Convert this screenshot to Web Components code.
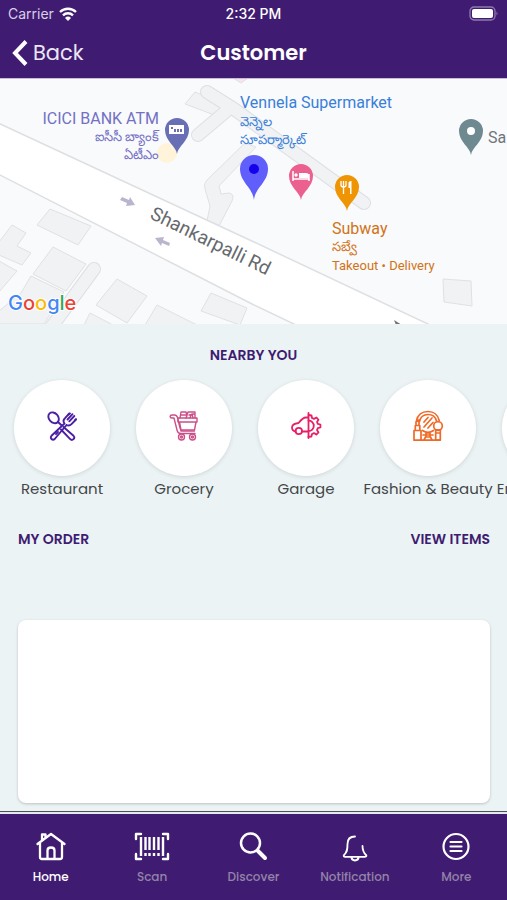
<!DOCTYPE html>
<html lang="en">
<head>
<meta charset="utf-8">
<meta name="viewport" content="width=device-width, initial-scale=1">
<title>Customer</title>
<style>
  body {
    margin: 0;
    min-height: 100vh;
    display: flex;
    flex-direction: column;
    background: #ebf3f5;
    font-family: Poppins, Inter, sans-serif;
    --purple: #3f1c71;
    --ink: #444749;
  }
  main {
    flex: 1;
    display: flex;
    flex-direction: column;
    overflow: hidden;
  }
</style>
</head>
<body>
  <app-header heading="Customer" time="2:32 PM"></app-header>
  <main>
    <map-view></map-view>
    <category-list heading="NEARBY YOU">
      <category-item icon="restaurant">Restaurant</category-item>
      <category-item icon="grocery">Grocery</category-item>
      <category-item icon="garage">Garage</category-item>
      <category-item icon="beauty">Fashion &amp; Beauty</category-item>
      <category-item>Entertainment</category-item>
    </category-list>
    <order-panel heading="MY ORDER" action="VIEW ITEMS"></order-panel>
  </main>
  <tab-bar>
    <tab-item icon="home" active>Home</tab-item>
    <tab-item icon="scan">Scan</tab-item>
    <tab-item icon="discover">Discover</tab-item>
    <tab-item icon="notification">Notification</tab-item>
    <tab-item icon="more">More</tab-item>
  </tab-bar>

<script>
const categoryIcons = {
  restaurant: `
    <svg viewBox="0 0 32 32" width="32" height="32" fill="none" stroke="#4b1fa3" stroke-width="1.900" stroke-linecap="round" stroke-linejoin="round" aria-hidden="true">
      <ellipse cx="7.6" cy="7.8" rx="4.6" ry="6" transform="rotate(-42 7.6 7.8)"/>
      <path d="M12 12l3.5 3.3M17.500 17l10 8.800a2.300 2.300 0 0 1-3.300 3.300L15 19.500"/>
      <path d="M18.500 13.500c-1.500-2-1-4 .5-5.300l4.300-4.700M20.500 15c2 1 3.700.5 5-.8l4.500-4.700M21.500 9.500l5-5.300M23.300 11.300l5-5.300M18.500 13.500l-13 12.300a2.200 2.200 0 0 0 3.200 3.200L20.500 15"/>
      <path d="M22.500 4.500l1.500-1M29 10.200l1-1M10 24l2-2"/>
    </svg>`,
  grocery: `
    <svg viewBox="0 0 32 32" width="32" height="32" fill="none" stroke="#cb4f89" stroke-width="1.400" stroke-linecap="round" stroke-linejoin="round" aria-hidden="true">
      <path d="M4 8c-2.500 0-2.500-3 0-3h2.500c1.500 0 2.500 1 3 2.500l2 8.500 1.500 5h13.500M4 8h2l3 12c.5 2.500 2 3.500 4 3.500h14"/>
      <path d="M10 8h19v4H10zM11.500 12l1.500 8h13.500l1.500-8"/>
      <path d="M12 8l1-6h5l1 4M13 5h5M18 8l2-6h7v6M21 5l5-1M22 8l1-3M25 8l-1-4"/>
      <circle cx="13.5" cy="27" r="3"/><circle cx="13.5" cy="27" r="1"/>
      <circle cx="24.500" cy="27" r="3"/><circle cx="24.500" cy="27" r="1"/>
    </svg>`,
  garage: `
    <svg viewBox="0 0 32 32" width="32" height="32" fill="none" stroke="#e81f66" stroke-width="1.800" stroke-linecap="round" stroke-linejoin="round" aria-hidden="true">
      <path d="M18.500 3v25M18.500 7.500h-2.500c-3 0-5.500 3-7.500 5.500-4 .5-6.500 2-6.500 4.500 0 2 .5 3.500 3.500 4M12 21.500h6.500"/>
      <circle cx="8.800" cy="21" r="3.200"/>
      <path d="M18.500 10.500a5.300 5.300 0 0 1 0 10.600"/>
      <path d="M18.500 5l3 .5.500 2.500 2 .9 2.500-1.400 2 2.300-1.500 2.200.8 1.800 2.600.700v3l-2.600.700-.8 1.900 1.500 2.300-2.200 2.200-2.300-1.500-2 .9-.6 2.500-3 .3"/>
    </svg>`,
  beauty: `
    <svg viewBox="0 0 32 32" width="32" height="32" fill="none" stroke="#ef6a28" stroke-width="1.700" stroke-linecap="round" stroke-linejoin="round" aria-hidden="true">
      <path d="M4.500 11C5.500 5 10 1.500 16 1.500c5.500 0 10 3.300 11.200 9"/>
      <path d="M7.500 11.500C8.500 7 11.500 4.500 16 4.500c4.300 0 7.500 2.500 8.500 6.500M10.500 20.500c3.500 2.400 7.500 2.400 11 0"/>
      <path d="M2 20.500h7v9.700H2zM3.300 15.500h4.500v5H3.300zM4 15.500V12l3-2v5.500"/>
      <circle cx="26" cy="16" r="4.300"/>
      <path d="M23.700 19.800h4.600V30h-4.600zM23.700 23h4.600M12 17l8-9M12 12l4-4.500M16 18l5-5.500"/>
      <path d="M14 23h4v4h-4zM12 30l1.500-3h5l1.500 3zM9 30.200h19M11 25h10"/>
    </svg>`
};

const tabIcons = {
  home: `<path d="M1.500 13L15 3l13.500 10M4 12v14q0 2 2 2h18q2 0 2-2V12M6 9V3.500h3.500v3M11.500 28v-8.500q0-3 3.500-3t3.500 3V28" stroke-width="2.300"/>`,
  scan: `<path d="M-1 8V3h5M26 3h5v5M31 23v5h-5M4 28h-5v-5" stroke-width="2.400"/>
         <path d="M4 6v19M8.500 6v13M12.500 6v13M17 6v13M21.500 6v13M26 6v19M8.500 22v3M12.500 22v3M17 22v3M21.500 22v3" stroke-width="2.400" stroke-linecap="butt"/>`,
  discover: `<circle cx="12.500" cy="12" r="9.500" stroke-width="2.500"/><path d="M20 20l7 7" stroke-width="4"/>`,
  notification: `<path d="M15 5.500c-5.500 0-7.500 3-7.500 7.500 0 6-.5 8.500-3.500 11-.8 1 0 1.800 1 1.800h20c1.500 0 1.800-1 1-1.800-2.500-2.500-3.500-5-3.500-9" stroke-width="1.800"/>
                 <path d="M11.500 26c0 4.500 7 4.500 7 0" stroke-width="2"/>`,
  more: `<circle cx="15" cy="15.500" r="12.500" stroke-width="2.200"/><path d="M9.500 11h11M9.500 15.500h11M9.500 20h11" stroke-width="2.200"/>`
};

class AppHeader extends HTMLElement {
  constructor() {
    super();
    this.shadow = this.attachShadow({ mode: "open" });
  }

  connectedCallback() {
    let heading = this.getAttribute("heading");
    let time = this.getAttribute("time");

    this.shadow.innerHTML = `
      <style>
        :host {
          display: block;
          background: var(--purple);
          color: #fff;
          border-bottom: 1px solid #cabbdd;
        }
        .row {
          display: grid;
          grid-template-columns: 1fr auto 1fr;
          align-items: center;
          padding: 0 8px;
        }
        .status {
          height: 27px;
          font: 15px/27px Inter, sans-serif;
        }
        .carrier {
          display: flex;
          align-items: center;
          gap: 5px;
          color: #d9d0e6;
          font-size: 14px;
        }
        .time {
          font-size: 14px;
          font-weight: 500;
        }
        .battery {
          justify-self: end;
        }
        .nav {
          height: 51px;
          padding-left: 12px;
          padding-right: 12px;
        }
        svg {
          display: block;
        }
        button {
          justify-self: start;
          display: flex;
          align-items: center;
          gap: 5px;
          padding: 0;
          border: 0;
          background: none;
          color: #ece6f4;
          font: inherit;
          font-size: 21px;
        }
        h1 {
          margin: 0;
          font-size: 21px;
          font-weight: 600;
        }
      </style>
      <div class="row status">
        <div class="carrier">
          <span>Carrier</span>
          <svg viewBox="0 0 18 14" width="18" height="14" fill="none" stroke="#fff" stroke-width="2.400" aria-hidden="true">
            <path d="M1 5a11.500 11.500 0 0 1 16 0M4 8.300a7.300 7.300 0 0 1 10 0"/>
            <path d="M9 14L6 10.900a4.300 4.300 0 0 1 6 0z" fill="#fff" stroke="none"/>
          </svg>
        </div>
        <div class="time">${time}</div>
        <svg class="battery" viewBox="0 0 30 15" width="30" height="15" aria-hidden="true">
          <rect x="1" y="1" width="25" height="13" rx="4" fill="none" stroke="#8f7aae" stroke-width="1.300"/>
          <rect x="3" y="3" width="21" height="9" rx="2" fill="#fff"/>
          <path d="M27.500 5.500v4q2-2 0-4" fill="#8f7aae"/>
        </svg>
      </div>
      <div class="row nav">
        <button type="button">
          <svg viewBox="0 0 16 26" width="16" height="26" fill="none" stroke="#fff" stroke-width="4" aria-hidden="true">
            <path d="M14 1.500L3 13l11 11.500"/>
          </svg>
          Back
        </button>
        <h1>${heading}</h1>
      </div>
    `;
  }
}
customElements.define("app-header", AppHeader);

class MapView extends HTMLElement {
  constructor() {
    super();
    this.shadow = this.attachShadow({ mode: "open" });
  }

  connectedCallback() {
    this.shadow.innerHTML = `
      <style>
        :host {
          display: block;
          height: 245px;
          background: #f8fafc;
          font-family: Roboto, "Noto Sans", sans-serif;
        }
        svg {
          display: block;
          width: 100%;
          height: 100%;
        }
        .building {
          fill: #f0f2f4;
          stroke: #dfe1e4;
        }
        .lane-edge, .lane {
          fill: none;
          stroke-linecap: round;
          stroke-linejoin: round;
        }
        .lane-edge {
          stroke: #dde0e4;
          stroke-width: 14;
        }
        .lane {
          stroke: #f0f2f4;
          stroke-width: 12;
        }
        .bank {
          fill: #7470c4;
        }
        .shop {
          fill: #3a7fd9;
        }
        .food {
          fill: #d27317;
        }
        .big {
          font-size: 16px;
        }
        .small {
          font-size: 13px;
        }
        .logo {
          font: 500 20px Inter, sans-serif;
          stroke: #fff;
          stroke-width: 2;
          paint-order: stroke;
        }
      </style>
      <svg viewBox="0 0 507 245" preserveAspectRatio="xMidYMid slice" role="img" aria-label="Map">
        <defs>
          <path id="pin" d="M0 24C-1 16-12 11-12 0A12 12 0 1 1 12 0C12 11 1 16 0 24z"/>
        </defs>
        <g class="building">
          <path d="M195 13l34 14-12 10-32-12z"/>
          <path d="M50 130l41 17-13 19-41-20z"/>
          <path d="M12 146l14 8-9 13 14 7-9 12-23-10v-13z"/>
          <path d="M53 168l33 17-20 27-33-17z"/>
          <path d="M-1 182l18 10-18 21z"/>
          <path d="M31 197l33 16-20 32H-1v-13l22-18z"/>
          <path d="M117 200l30 17-20 27-31-18z"/>
          <path d="M157 226l40 20h-52z"/>
          <path d="M90 234l23 12H84z"/>
          <path d="M211 214l36 15-7 17-39-14z"/>
          <path d="M443 200l28 2 1 25-28-4z"/>
          <path d="M233-1h15l-7 5z" fill="#f8e5ea"/>
          <path d="M245 64L207 101Q203 105 205 110L210 127 207 142 219 147 232 122Q235 115 229 114L221 115 219 107 256 68z"/>
        </g>
        <g class="lane-edge">
          <path d="M207 13L234 30L364 124M230 29L198 56"/>
          <path d="M94 190L50 250"/>
        </g>
        <g class="lane">
          <path d="M207 13L234 30L364 124M230 29L198 56"/>
          <path d="M94 190L50 250"/>
        </g>
        <path d="M-2 44L254 163L430 246H296L254 226L-2 95z" fill="#fff" stroke="#dddfe2" stroke-width="1.500"/>
        <g fill="#b8b6cc">
          <path d="M122 118l7 3 1-3 5 8-9 1 1-3-7-3z"/>
          <path d="M170 164l-7-3 1-3-9 1 6 8 1-3 7 3z"/>
          <path d="M394 241l8 5h-6z" fill="#70757a"/>
        </g>
        <text transform="translate(149 139) rotate(26)" font-size="19" fill="#65696d">Shankarpalli Rd</text>

        <circle cx="167" cy="74" r="10" fill="#fff4d9"/>
        <g class="bank" text-anchor="end">
          <text x="159" y="45" class="big">ICICI BANK ATM</text>
          <text x="159" y="62" class="small">ఐసీసీ బ్యాంక్</text>
          <text x="159" y="80" class="small">ఏటీఎం</text>
        </g>
        <use href="#pin" x="177" y="51" fill="#696fb5"/>
        <path d="M169 46h15v9h-15z" fill="#fff"/>
        <path d="M171 48h2v2h-2zM174 50h2v3h-2zM177 50h2v3h-2zM180 50h2v3h-2z" fill="#696fb5"/>

        <g class="shop">
          <text x="240" y="29" class="big">Vennela Supermarket</text>
          <text x="240" y="47" class="small">వెన్నెల</text>
          <text x="240" y="65" class="small">సూపర్మార్కెట్</text>
        </g>
        <path d="M254 121C253 109 240 103 240 90a14 14 0 1 1 28 0C268 103 255 109 254 121z" fill="#605ffb"/>
        <circle cx="254" cy="90" r="5" fill="#1500ea"/>

        <use href="#pin" x="301" y="97" fill="#ec6090"/>
        <g fill="none" stroke="#fff" stroke-width="1.500">
          <path d="M293 92v10M293 100h16M309 102v-7"/>
          <path d="M299 94h7q3 0 3 3v2h-10z" fill="#fff" stroke="none"/>
          <circle cx="296" cy="96" r="1.700" fill="#fff" stroke="none"/>
        </g>

        <use href="#pin" x="347" y="108" fill="#ef9503"/>
        <g fill="none" stroke="#fff" stroke-width="1.300">
          <path d="M341 102v4q0 2 2.500 2t2.500-2v-4M343.500 102v13"/>
          <path d="M350 115v-6h-1.500v-5q0-2 3-2v13z" fill="#fff" stroke="none"/>
        </g>
        <g class="food">
          <text x="332" y="155" class="big">Subway</text>
          <text x="332" y="172" class="small">సబ్వే</text>
          <text x="332" y="191" class="small">Takeout • Delivery</text>
        </g>

        <use href="#pin" x="471" y="52" fill="#6f8990"/>
        <circle cx="471" cy="52" r="4" fill="#fff"/>
        <text x="488" y="64" class="big" fill="#70757a">Sa</text>

        <text x="8" y="231" class="logo"><tspan fill="#4285f4">G</tspan><tspan fill="#ea4335">o</tspan><tspan fill="#fbbc05">o</tspan><tspan fill="#4285f4">g</tspan><tspan fill="#34a853">l</tspan><tspan fill="#ea4335">e</tspan></text>
      </svg>
    `;
  }
}
customElements.define("map-view", MapView);

class CategoryList extends HTMLElement {
  constructor() {
    super();
    this.shadow = this.attachShadow({ mode: "open" });
  }

  connectedCallback() {
    let heading = this.getAttribute("heading");

    this.shadow.innerHTML = `
      <style>
        :host {
          display: block;
          padding-top: 19px;
        }
        h2 {
          margin: 0;
          color: var(--purple);
          font-size: 14px;
          line-height: 24px;
          font-weight: 600;
          text-align: center;
        }
        .list {
          display: flex;
          gap: 26px;
          padding: 13px 14px 0;
          overflow: hidden;
        }
      </style>
      <h2>${heading}</h2>
      <div class="list"><slot></slot></div>
    `;
  }
}
customElements.define("category-list", CategoryList);

class CategoryItem extends HTMLElement {
  constructor() {
    super();
    this.shadow = this.attachShadow({ mode: "open" });
  }

  connectedCallback() {
    let icon = categoryIcons[this.getAttribute("icon")] || "";

    this.shadow.innerHTML = `
      <style>
        :host {
          display: block;
          flex: 0 0 96px;
          min-width: 0;
        }
        a {
          display: flex;
          flex-direction: column;
          align-items: center;
          color: var(--ink);
          font-size: 15px;
          line-height: 26px;
          white-space: nowrap;
          text-decoration: none;
        }
        .circle {
          display: grid;
          place-items: center;
          box-sizing: border-box;
          width: 96px;
          height: 96px;
          padding-bottom: 4px;
          border-radius: 50%;
          background: #fff;
          box-shadow: 0 1px 4px rgba(0, 0, 0, 0.12);
        }
      </style>
      <a href="#">
        <span class="circle">${icon}</span>
        <span><slot></slot></span>
      </a>
    `;
  }
}
customElements.define("category-item", CategoryItem);

class OrderPanel extends HTMLElement {
  constructor() {
    super();
    this.shadow = this.attachShadow({ mode: "open" });
  }

  connectedCallback() {
    let heading = this.getAttribute("heading");
    let action = this.getAttribute("action");

    this.shadow.innerHTML = `
      <style>
        :host {
          flex: 1;
          display: flex;
          flex-direction: column;
          gap: 69px;
          padding: 25px 17px 8px 18px;
        }
        .top {
          display: flex;
          justify-content: space-between;
          line-height: 24px;
        }
        h2, a {
          margin: 0;
          color: var(--purple);
          font-size: 14px;
          font-weight: 600;
          text-decoration: none;
        }
        .card {
          flex: 1;
          min-height: 160px;
          border-radius: 8px;
          background: #fff;
          box-shadow: 0 1px 3px rgba(0, 0, 0, 0.2);
        }
      </style>
      <div class="top">
        <h2>${heading}</h2>
        <a href="#">${action}</a>
      </div>
      <div class="card"></div>
    `;
  }
}
customElements.define("order-panel", OrderPanel);

class TabBar extends HTMLElement {
  constructor() {
    super();
    this.shadow = this.attachShadow({ mode: "open" });
  }

  connectedCallback() {
    this.shadow.innerHTML = `
      <style>
        :host {
          display: block;
          border-top: 1px solid #4d5155;
          background: var(--purple);
        }
        nav {
          display: grid;
          grid-template-columns: repeat(5, 1fr);
          padding: 17px 0 13px;
          border-top: 2px solid #e4e9ee;
        }
      </style>
      <nav><slot></slot></nav>
    `;
  }
}
customElements.define("tab-bar", TabBar);

class TabItem extends HTMLElement {
  constructor() {
    super();
    this.shadow = this.attachShadow({ mode: "open" });
  }

  connectedCallback() {
    let icon = tabIcons[this.getAttribute("icon")];

    this.shadow.innerHTML = `
      <style>
        :host {
          display: block;
          color: #9383a8;
        }
        :host([active]) {
          color: #fff;
        }
        a {
          display: flex;
          flex-direction: column;
          align-items: center;
          gap: 4px;
          color: inherit;
          font-size: 12px;
          line-height: 20px;
          font-weight: 500;
          text-decoration: none;
        }
        svg {
          display: block;
          overflow: visible;
        }
      </style>
      <a href="#">
        <svg viewBox="0 0 30 32" width="30" height="32" fill="none" stroke="#fff" stroke-linecap="round" stroke-linejoin="round" aria-hidden="true">${icon}</svg>
        <span><slot></slot></span>
      </a>
    `;
  }
}
customElements.define("tab-item", TabItem);
</script>
</body>
</html>
